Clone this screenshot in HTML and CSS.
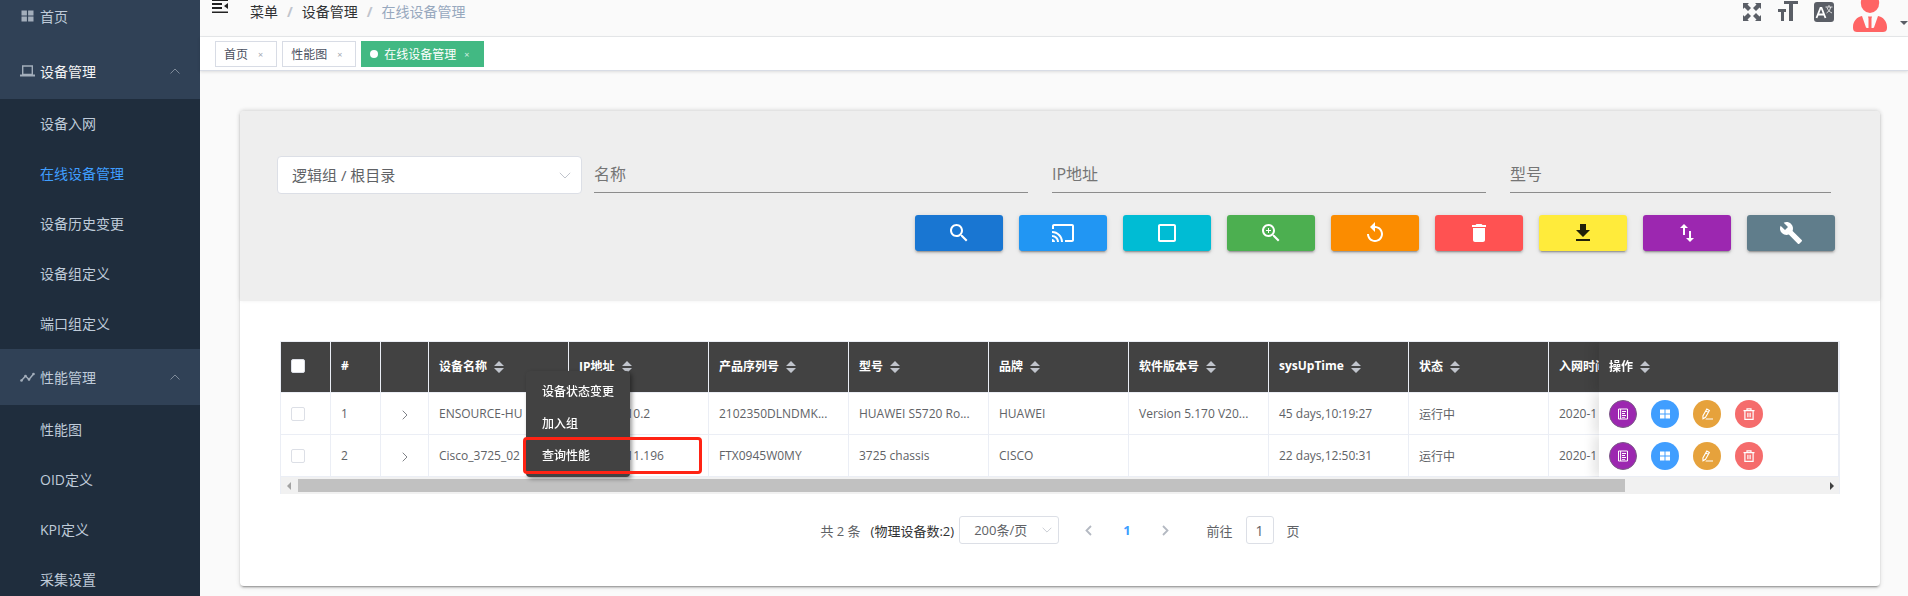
FILE: index.html
```html
<!DOCTYPE html>
<html lang="zh-CN">
<head>
<meta charset="utf-8">
<title>在线设备管理</title>
<link rel="stylesheet" href="styles.css">
</head>
<body>
<svg class="sprite" aria-hidden="true">
  <symbol id="grid" viewBox="0 0 12 12"><path d="M0 .5h5.4v5H0zM6.600.5H12v5H6.600zM0 6.500h5.400v5H0zM6.600 6.500H12v5H6.600z"/></symbol>
  <symbol id="sort" viewBox="0 0 10 12"><path d="M5 0l5 5H0zM5 12L0 7h10z"/></symbol>
  <symbol id="up" viewBox="0 0 10 6"><path d="M.5 5.500L5 1l4.500 4.500" fill="none" stroke="currentColor"/></symbol>
  <symbol id="down" viewBox="0 0 12 7"><path d="M.8.8L6 6l5.200-5.200" fill="none" stroke="currentColor"/></symbol>
  <symbol id="right" viewBox="0 0 6 10"><path d="M.7.7L5 5 .7 9.300" fill="none" stroke="currentColor"/></symbol>
  <symbol id="bold-right" viewBox="0 0 7 11"><path d="M1 1l4.500 4.500L1 10" fill="none" stroke="currentColor" stroke-width="1.800"/></symbol>
  <symbol id="book" viewBox="0 0 12 12"><path d="M1.500 1h9v10h-9zM3.600 1v10" fill="none" stroke="currentColor"/><path d="M5 3h4v1H5zM5 5h3v1H5zM5 7h4v1H5zM5 9h3v.8H5z"/></symbol>
  <symbol id="pen" viewBox="0 0 12 12"><path d="M5.800 1L8.400 2.500 4.500 9.300 2 10.800l-.1-2.900zM4.800 2.900l2.500 1.500" fill="none" stroke="currentColor" stroke-width="1.100"/><path d="M5 10.600h7v1H4.400z"/></symbol>
  <symbol id="bin" viewBox="0 0 12 12"><path d="M.500 2.700h11M4 2.500V.8h4v1.700M1.900 3v8.300h8.200V3M4.900 4.800v4.500M7.100 4.800v4.500" fill="none" stroke="currentColor" stroke-width="1.200"/></symbol>
</svg>
<div class="app">
  <nav class="sidebar" aria-label="主菜单">
    <a class="home" href="#"><svg class="menu-icon"><use href="#grid"/></svg>首页</a>
    <button class="group open" type="button">
      <svg class="menu-icon" viewBox="0 0 15 12"><path d="M2.700 1h9.600v8.500H2.700z" fill="none" stroke="currentColor" stroke-width="1.400"/><path d="M0 9.500h15V11.500H0z"/></svg>
      <span>设备管理</span><svg class="arrow"><use href="#up"/></svg>
    </button>
    <div class="submenu">
      <a href="#">设备入网</a>
      <a href="#" class="active">在线设备管理</a>
      <a href="#">设备历史变更</a>
      <a href="#">设备组定义</a>
      <a href="#">端口组定义</a>
    </div>
    <button class="group" type="button">
      <svg class="menu-icon" viewBox="0 0 15 12"><path d="M1.500 9.500l4-4.500 3.500 3.500 4.500-5.500" fill="none" stroke="currentColor" stroke-width="1.500"/><circle cx="1.500" cy="9.500" r="1.300"/><circle cx="5.500" cy="5" r="1.300"/><circle cx="9" cy="8.500" r="1.300"/><circle cx="13.500" cy="3" r="1.300"/></svg>
      <span>性能管理</span><svg class="arrow"><use href="#up"/></svg>
    </button>
    <div class="submenu">
      <a href="#">性能图</a>
      <a href="#">OID定义</a>
      <a href="#">KPI定义</a>
      <a href="#">采集设置</a>
    </div>
  </nav>

  <div class="main">
    <header class="navbar">
      <button class="collapse" type="button" aria-label="收起菜单"><svg viewBox="0 0 16 13"><path d="M0 0h16v1H0zM0 3h10v2H0zM0 7h10v2H0zM0 11.500h16V13H0zM16 3v6l-4-3z"/></svg></button>
      <div class="crumbs"><a href="#">菜单</a><i>/</i><a href="#">设备管理</a><i>/</i><span>在线设备管理</span></div>
      <div class="tools">
        <svg class="t-full" viewBox="0 0 18 18"><path d="M0 0h6L4.500 1.500 8 5 5 8 1.500 4.500 0 6zM18 0v6l-1.500-1.500L13 8l-3-3 3.500-3.500L12 0zM0 18v-6l1.500 1.500L5 10l3 3-3.500 3.500L6 18zM18 18h-6l1.500-1.500L10 13l3-3 3.500 3.500L18 12z"/></svg>
        <svg class="t-size" viewBox="0 0 20 20"><path d="M6 0h14v3h-5v17h-4V3H6zM0 8h8v3H6v9H3v-9H0z"/></svg>
        <svg class="t-lang" viewBox="0 0 20 20"><rect width="20" height="20" rx="3"/><path d="M2.500 16L6.500 6h1l4 10M4 12.500h6" fill="none" stroke="#fff" stroke-width="1.800"/><path d="M11.500 5h7M15 3v2M12.500 11c2-1.200 3.600-3 4.200-6M13 5.500c.8 2.500 2.600 4.500 5 5.500" fill="none" stroke="#fff" stroke-width=".8"/></svg>
        <svg class="t-user" viewBox="0 0 34 32"><ellipse cx="17" cy="3" rx="9.200" ry="10"/><path d="M9 16l4 11.500L13.800 28h1.700V18.500L15 16.500h4l-.5 2V28h1.700l.8-.5L25 16c5 1 9 5 9 11v1c0 3-2 4-4 4H4c-2 0-4-1-4-4v-1c0-6 4-10 9-11z"/></svg>
        <svg class="t-caret" viewBox="0 0 8 4"><path d="M0 0h8L4 4z"/></svg>
      </div>
    </header>
    <div class="tags">
      <a class="tag" href="#">首页<b>×</b></a>
      <a class="tag" href="#">性能图<b>×</b></a>
      <a class="tag current" href="#">在线设备管理<b>×</b></a>
    </div>

    <main class="card">
      <form class="filters">
        <div class="fields">
          <div class="pick"><select aria-label="逻辑组"><option>逻辑组 / 根目录</option></select><svg><use href="#down"/></svg></div>
          <input type="text" aria-label="名称" placeholder="名称">
          <input type="text" aria-label="IP地址" placeholder="IP地址">
          <input type="text" aria-label="型号" placeholder="型号">
        </div>
        <div class="actions">
          <button type="button" class="c-search" aria-label="查询"><svg viewBox="0 0 24 24"><path d="M15.500 14h-.79l-.28-.27C15.410 12.590 16 11.110 16 9.500 16 5.910 13.090 3 9.500 3S3 5.910 3 9.500 5.910 16 9.500 16c1.610 0 3.090-.59 4.230-1.570l.27.28v.79l5 4.990L20.490 19l-4.990-5zm-6 0C7.010 14 5 11.990 5 9.500S7.010 5 9.500 5 14 7.010 14 9.500 11.990 14 9.500 14z"/></svg></button>
          <button type="button" class="c-cast" aria-label="投屏"><svg viewBox="0 0 24 24"><path d="M21 3H3c-1.100 0-2 .9-2 2v3h2V5h18v14h-7v2h7c1.100 0 2-.9 2-2V5c0-1.100-.9-2-2-2zM1 18v3h3c0-1.660-1.340-3-3-3zm0-4v2c2.760 0 5 2.240 5 5h2c0-3.870-3.130-7-7-7zm0-4v2c4.970 0 9 4.030 9 9h2c0-6.080-4.930-11-11-11z"/></svg></button>
          <button type="button" class="c-box" aria-label="选择"><svg viewBox="0 0 24 24"><path d="M19 3H5c-1.100 0-2 .9-2 2v14c0 1.100.9 2 2 2h14c1.100 0 2-.9 2-2V5c0-1.100-.9-2-2-2zm0 16H5V5h14v14z"/></svg></button>
          <button type="button" class="c-zoom" aria-label="放大"><svg viewBox="0 0 24 24"><path d="M15.500 14h-.79l-.28-.27C15.410 12.590 16 11.110 16 9.500 16 5.910 13.090 3 9.500 3S3 5.910 3 9.500 5.910 16 9.500 16c1.610 0 3.090-.59 4.230-1.570l.27.28v.79l5 4.990L20.490 19l-4.990-5zm-6 0C7.010 14 5 11.990 5 9.500S7.010 5 9.500 5 14 7.010 14 9.500 11.990 14 9.500 14zM12 10h-2v2H9v-2H7V9h2V7h1v2h2v1z"/></svg></button>
          <button type="button" class="c-reset" aria-label="重置"><svg viewBox="0 0 24 24"><path d="M12 5V1L7 6l5 5V7c3.310 0 6 2.690 6 6s-2.690 6-6 6-6-2.690-6-6H4c0 4.420 3.580 8 8 8s8-3.580 8-8-3.580-8-8-8z"/></svg></button>
          <button type="button" class="c-del" aria-label="删除"><svg viewBox="0 0 24 24"><path d="M6 19c0 1.100.9 2 2 2h8c1.100 0 2-.9 2-2V7H6v12zM19 4h-3.500l-1-1h-5l-1 1H5v2h14V4z"/></svg></button>
          <button type="button" class="c-down" aria-label="下载"><svg viewBox="0 0 24 24"><path d="M5 20h14v-2H5zM19 9h-4V3H9v6H5l7 7z"/></svg></button>
          <button type="button" class="c-swap" aria-label="导入导出"><svg viewBox="0 0 24 24"><path d="M9 3L5 6.990h3V14h2V6.990h3L9 3zM16 17.010V10h-2v7.010h-3L15 21l4-3.990h-3z"/></svg></button>
          <button type="button" class="c-tool" aria-label="工具"><svg viewBox="0 0 24 24"><path d="M22.700 19l-9.100-9.100c.9-2.300.4-5-1.500-6.900-2-2-5-2.400-7.400-1.300L9 6 6 9 1.600 4.700C.4 7.100.9 10.100 2.900 12.100c1.900 1.900 4.600 2.400 6.900 1.500l9.100 9.100c.4.4 1 .4 1.400 0l2.300-2.300c.5-.4.5-1.100.1-1.400z"/></svg></button>
        </div>
      </form>

      <section class="content">
        <div class="grid-wrap">
          <div class="grid">
            <table>
              <colgroup><col class="w50"><col class="w50"><col class="w48"><col class="w140"><col class="w140"><col class="w140"><col class="w140"><col class="w140"><col class="w140"><col class="w140"><col class="w140"><col class="w280"><col class="w240"></colgroup>
              <thead><tr>
                <th><input type="checkbox" aria-label="全选"></th><th>#</th><th></th>
                <th>设备名称<svg><use href="#sort"/></svg></th>
                <th>IP地址<svg><use href="#sort"/></svg></th>
                <th>产品序列号<svg><use href="#sort"/></svg></th>
                <th>型号<svg><use href="#sort"/></svg></th>
                <th>品牌<svg><use href="#sort"/></svg></th>
                <th>软件版本号<svg><use href="#sort"/></svg></th>
                <th>sysUpTime<svg><use href="#sort"/></svg></th>
                <th>状态<svg><use href="#sort"/></svg></th>
                <th>入网时间</th>
                <th class="fixed">操作<svg><use href="#sort"/></svg></th>
              </tr></thead>
              <tbody>
                <tr>
                  <td><input type="checkbox" aria-label="选择第1行"></td><td>1</td><td class="expand"><svg><use href="#right"/></svg></td>
                  <td>ENSOURCE-HU</td><td>192.168.10.2</td><td>2102350DLNDMK...</td><td>HUAWEI S5720 Ro...</td><td>HUAWEI</td><td>Version 5.170 V20...</td><td>45 days,10:19:27</td><td>运行中</td><td>2020-1</td>
                  <td class="fixed"><div class="ops"><button type="button" class="o-info" aria-label="详情"><svg><use href="#book"/></svg></button><button type="button" class="o-grid" aria-label="面板"><svg><use href="#grid"/></svg></button><button type="button" class="o-edit" aria-label="编辑"><svg><use href="#pen"/></svg></button><button type="button" class="o-del" aria-label="删除"><svg><use href="#bin"/></svg></button></div></td>
                </tr>
                <tr>
                  <td><input type="checkbox" aria-label="选择第2行"></td><td>2</td><td class="expand"><svg><use href="#right"/></svg></td>
                  <td>Cisco_3725_02</td><td>192.168.11.196</td><td>FTX0945W0MY</td><td>3725 chassis</td><td>CISCO</td><td></td><td>22 days,12:50:31</td><td>运行中</td><td>2020-1</td>
                  <td class="fixed"><div class="ops"><button type="button" class="o-info" aria-label="详情"><svg><use href="#book"/></svg></button><button type="button" class="o-grid" aria-label="面板"><svg><use href="#grid"/></svg></button><button type="button" class="o-edit" aria-label="编辑"><svg><use href="#pen"/></svg></button><button type="button" class="o-del" aria-label="删除"><svg><use href="#bin"/></svg></button></div></td>
                </tr>
              </tbody>
            </table>
            <div class="scroll"><svg class="s-left" viewBox="0 0 4 8"><path d="M4 0v8L0 4z"/></svg><div class="track"><div class="thumb"></div></div><svg class="s-right" viewBox="0 0 4 8"><path d="M0 0v8l4-4z"/></svg></div>
          </div>
          <div class="context" role="menu">
            <button type="button" role="menuitem">设备状态变更</button>
            <button type="button" role="menuitem">加入组</button>
            <button type="button" role="menuitem">查询性能</button>
          </div>
          <div class="highlight"></div>
        </div>
        <div class="pager">
          <span>共 2 条</span>
          <span class="real">(物理设备数:2)</span>
          <div class="pick small"><select aria-label="每页条数"><option>200条/页</option></select><svg><use href="#down"/></svg></div>
          <button type="button" class="prev" aria-label="上一页"><svg><use href="#bold-right"/></svg></button>
          <button type="button" class="page">1</button>
          <button type="button" class="next" aria-label="下一页"><svg><use href="#bold-right"/></svg></button>
          <label class="jump">前往<input type="text" value="1">页</label>
        </div>
      </section>
    </main>
  </div>
</div>
</body>
</html>
```
FILE: styles.css
```css
* { box-sizing: border-box; }
body {
  margin: 0;
  overflow: hidden;
  background: #fafafa;
  color: #606266;
  font-family: "Open Sans", "Noto Sans CJK SC", sans-serif;
  font-size: 14px;
}
button, input, select { font: inherit; color: inherit; margin: 0; padding: 0; border: 0; background: none; }
a { color: inherit; text-decoration: none; }
svg { fill: currentColor; flex: none; }
.sprite { display: none; }
.app { display: flex; height: 100vh; }

/* Sidebar */
.sidebar { flex: 0 0 200px; overflow: hidden; background: #304156; color: #bfcbd9; }
.home, .group { display: flex; align-items: center; width: 100%; padding: 0 20px; text-align: left; }
.home { height: 43px; padding-bottom: 12px; }
.group { height: 56px; }
.group.open { color: #f4f4f5; }
.menu-icon { width: 15px; height: 12px; margin-right: 5px; color: #a3aebb; }
.arrow { width: 10px; height: 6px; margin-left: auto; color: #7e8a99; }
.submenu { background: #1f2d3d; }
.submenu a { display: block; padding-left: 40px; line-height: 50px; }
.submenu .active { color: #409eff; }

/* Top bar */
.main { flex: 1; min-width: 0; }
.navbar { display: flex; height: 37px; padding-left: 12px; border-bottom: 1px solid #e8eaec; color: #303133; }
.collapse { display: flex; width: 16px; height: 13px; color: #222; }
.collapse svg { width: 16px; height: 13px; }
.crumbs { display: flex; padding-left: 22px; line-height: 23px; }
.crumbs i { margin: 0 9px; color: #c0c4cc; font-weight: 700; font-style: normal; }
.crumbs span { color: #97a8be; }
.tools { display: flex; align-items: flex-start; margin-left: auto; color: #5a5e66; }
.t-full { width: 18px; height: 18px; margin-top: 3px; }
.t-size { width: 20px; height: 20px; margin: 1px 16px 0 17px; }
.t-lang { width: 20px; height: 20px; margin-top: 2px; }
.t-user { width: 34px; height: 32px; margin-left: 19px; color: #ff6464; }
.t-caret { width: 8px; height: 4px; margin: 21px 0 0 13px; }

.tags { display: flex; gap: 5px; height: 34px; padding: 4px 15px; border-bottom: 1px solid #d8dce5; background: #fff; box-shadow: 0 1px 3px rgba(0, 0, 0, .12); font-size: 12px; }
.tag { display: flex; align-items: center; height: 26px; padding: 0 13px 0 8px; border: 1px solid #d8dce5; color: #495060; }
.tag b { margin-left: 10px; color: #a3a7b0; font-size: 9px; font-weight: 400; }
.tag.current { border-color: #42b983; background: #42b983; color: #fff; }
.tag.current::before { content: ""; width: 8px; height: 8px; margin-right: 6px; border-radius: 50%; background: #fff; }
.tag.current b { margin-left: 8px; color: #d4f0e3; }

/* Card */
.card { margin: 40px 28px 0 40px; border-radius: 4px; background: #fff; box-shadow: 0 3px 1px -2px rgba(0, 0, 0, .2), 0 2px 2px rgba(0, 0, 0, .14), 0 1px 5px rgba(0, 0, 0, .12); }
.filters { height: 190px; padding: 45px 37px 0; border-radius: 4px 4px 0 0; background: #eee; box-shadow: 0 -1px 4px rgba(0, 0, 0, .1); }
.fields { display: grid; grid-template-columns: 305fr 446fr 446fr 333fr; gap: 12px; }
.pick { position: relative; }
.pick select { appearance: none; width: 100%; height: 38px; padding: 0 14px; border: 1px solid #dcdfe6; border-radius: 4px; background: #fff; font-size: 15px; }
.pick svg { position: absolute; top: 50%; right: 11px; width: 12px; height: 7px; margin-top: -3px; color: #c0c4cc; }
.fields > input { min-width: 0; height: 37px; margin-right: 12px; border-bottom: 1px solid #8c8c8c; font-size: 16px; }
.fields > input::placeholder { color: #757575; opacity: 1; }
.actions { display: flex; justify-content: flex-end; gap: 16px; padding-top: 21px; margin-right: 8px; }
.actions button { display: flex; align-items: center; justify-content: center; width: 88px; height: 36px; border-radius: 3px; color: #fff; box-shadow: 0 3px 1px -2px rgba(0, 0, 0, .2), 0 2px 2px rgba(0, 0, 0, .14), 0 1px 5px rgba(0, 0, 0, .12); }
.actions svg { width: 24px; height: 24px; }
.actions .c-search { background: #1976d2; }
.actions .c-cast { background: #2196f3; }
.actions .c-box { background: #00bcd4; }
.actions .c-zoom { background: #4caf50; }
.actions .c-reset { background: #fb8c00; }
.actions .c-del { background: #ff5252; }
.actions .c-down { background: #ffeb3b; color: #212109; }
.actions .c-swap { background: #9c27b0; }
.actions .c-tool { background: #607d8b; }

/* Table */
.content { padding: 40px 40px 42px; }
.grid-wrap { position: relative; }
.grid { overflow: hidden; border: 1px solid #ebeef5; border-bottom: 0; font-size: 12px; }
table { table-layout: fixed; width: 1788px; border-collapse: separate; border-spacing: 0; }
.w48 { width: 48px; }
.w50 { width: 50px; }
.w140 { width: 140px; }
.w240 { width: 240px; }
.w280 { width: 280px; }
th, td { padding: 0 10px; border: solid #ebeef5; border-width: 0 1px 1px 0; background: #fff; text-align: left; white-space: nowrap; }
th { height: 51px; padding-bottom: 3px; background: #424242; color: #fff; font-weight: 700; }
td { height: 42px; }
th svg { width: 10px; height: 12px; margin-left: 7px; color: #c0c4cc; vertical-align: middle; }
.expand { text-align: center; }
.expand svg { width: 6px; height: 10px; color: #808388; vertical-align: middle; }
td input, th input { display: block; appearance: none; width: 14px; height: 14px; border: 1px solid #dcdfe6; border-radius: 2px; background: #fff; }
.fixed { position: sticky; right: 0; box-shadow: -6px 0 10px rgba(0, 0, 0, .1); clip-path: inset(0 0 0 -16px); }
.ops { display: flex; gap: 14px; }
.ops button { display: flex; align-items: center; justify-content: center; width: 28px; height: 28px; border-radius: 50%; color: #fff; }
.ops svg { width: 12px; height: 12px; }
.ops .o-info { border: 1px solid #7b5a86; background: #9c27b0; }
.ops .o-grid { background: #409eff; }
.ops .o-grid svg { width: 10px; height: 10px; }
.ops .o-edit { background: #e6a23c; }
.ops .o-del { background: #f56c6c; }
.scroll { display: flex; align-items: center; height: 17px; padding: 0 5px 0 6px; background: #f1f1f1; }
.scroll svg { width: 4px; height: 8px; }
.s-left { color: #a3a3a3; }
.s-right { color: #404040; }
.track { flex: 1; margin: 0 7px; }
.thumb { width: 87%; height: 13px; background: #c1c1c1; }

.context { position: absolute; top: 30px; left: 246px; width: 104px; padding: 5px 0; border-radius: 4px; background: #424242; box-shadow: 2px 2px 4px rgba(0, 0, 0, .4); color: #fff; font-size: 12px; font-weight: 500; }
.context button { display: block; width: 100%; padding-left: 16px; line-height: 32px; text-align: left; }
.highlight { position: absolute; top: 96px; left: 243px; width: 179px; height: 37px; border: 3px solid #ff2314; border-radius: 4px; pointer-events: none; }

/* Pagination */
.pager { display: flex; align-items: center; justify-content: center; padding-top: 22px; font-size: 13px; }
.real { margin: 0 5px 0 10px; color: #303133; }
.pick.small { width: 100px; }
.pick.small select { height: 28px; border-radius: 3px; font-size: 13px; }
.pick.small svg { right: 7px; width: 10px; height: 6px; }
.prev, .next { display: flex; width: 7px; color: #b4b9c2; }
.prev svg, .next svg { width: 7px; height: 11px; }
.prev { margin-left: 26px; }
.prev svg { transform: scaleX(-1); }
.page { margin: 0 31px; color: #409eff; font-weight: 700; }
.jump { display: flex; align-items: center; margin-left: 38px; }
.jump input { width: 28px; height: 28px; margin: 0 13px; border: 1px solid #dcdfe6; border-radius: 3px; text-align: center; font-size: 14px; }
```
